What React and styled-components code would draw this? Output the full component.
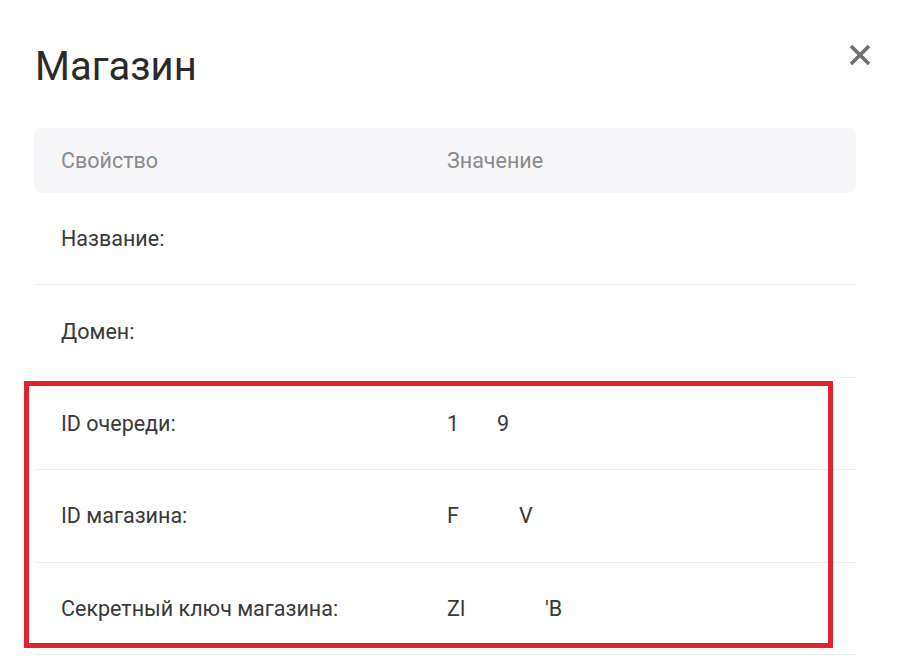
import React from "react";
import styled, { createGlobalStyle } from "styled-components";

const GlobalStyle = createGlobalStyle`
  html, body {
    margin: 0;
    padding: 0;
    background: #ffffff;
    font-family: Roboto, "Noto Sans", Arial, sans-serif;
  }
`;

const Modal = styled.div`
  width: 900px;
  height: 659px;
  box-sizing: border-box;
  padding: 0 44px 0 34px;
  overflow: hidden;
`;

const Header = styled.div`
  display: flex;
  align-items: flex-start;
  justify-content: space-between;
  height: 128px;
`;

const Title = styled.h1`
  margin: 41px 0 0 1px;
  font-size: 40px;
  font-weight: 400;
  line-height: 52px;
  color: #2a2a2a;
`;

const CloseButton = styled.button`
  margin: 43px -16px 0 0;
  padding: 0;
  width: 24px;
  height: 24px;
  border: none;
  background: none;
  color: #6f6f6f;
  cursor: pointer;
  display: flex;

  svg {
    width: 24px;
    height: 24px;
  }
`;

const HeadRow = styled.div`
  display: grid;
  grid-template-columns: 386px 1fr;
  align-items: center;
  height: 65px;
  padding-left: 27px;
  background: #f7f7fa;
  border-radius: 8px;
  font-size: 21.5px;
  color: #8a8a8a;
`;

const Row = styled.div`
  display: grid;
  grid-template-columns: 386px 1fr;
  align-items: center;
  height: 91.4px;
  padding-left: 27px;
  border-bottom: 1px solid #efefef;
  font-size: 21.5px;
  color: #383838;
`;

const Value = styled.span`
  display: inline-flex;
  align-items: center;
  white-space: pre;
`;

const Hidden = styled.span`
  display: inline-block;
  width: ${(p) => p.$w}px;
`;

const Highlight = styled.div`
  position: relative;

  &::after {
    content: "";
    position: absolute;
    top: 3px;
    left: -10px;
    right: 23px;
    bottom: 7px;
    border: 5px solid #e1222f;
    pointer-events: none;
  }
`;

const CloseIcon = () => (
  <svg viewBox="0 0 24 24" fill="none">
    <path
      d="M3 3L21 21M21 3L3 21"
      stroke="currentColor"
      strokeWidth="3.6"
      strokeLinecap="butt"
    />
  </svg>
);

export default function App() {
  return (
    <>
      <GlobalStyle />
      <Modal>
        <Header>
          <Title>Магазин</Title>
          <CloseButton aria-label="Закрыть">
            <CloseIcon />
          </CloseButton>
        </Header>

        <HeadRow>
          <span>Свойство</span>
          <span>Значение</span>
        </HeadRow>
        <Row>
          <span>Название:</span>
          <Value />
        </Row>
        <Row>
          <span>Домен:</span>
          <Value />
        </Row>
        <Highlight>
          <Row>
            <span>ID очереди:</span>
            <Value>
              1<Hidden $w={38} />9
            </Value>
          </Row>
          <Row>
            <span>ID магазина:</span>
            <Value>
              F<Hidden $w={60} />V
            </Value>
          </Row>
          <Row>
            <span>Секретный ключ магазина:</span>
            <Value>
              Zl<Hidden $w={80} />'B
            </Value>
          </Row>
        </Highlight>
      </Modal>
    </>
  );
}
